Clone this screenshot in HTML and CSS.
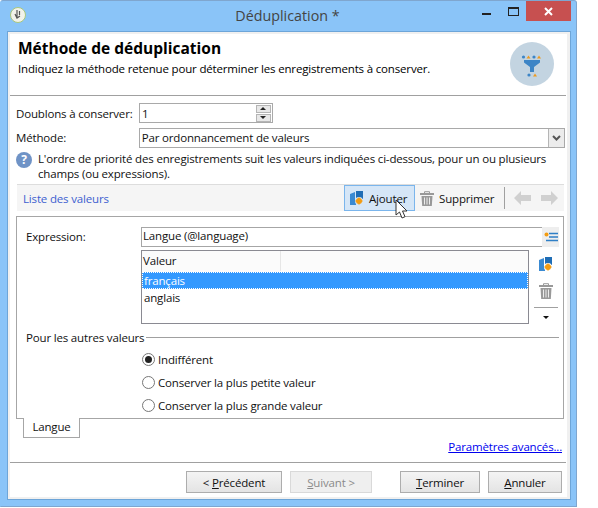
FILE: index.html
```html
<!DOCTYPE html>
<html lang="fr">
<head>
  <meta charset="UTF-8">
  <title>Déduplication *</title>
  <link rel="stylesheet" href="styles.css">
</head>
<body>

<div class="window">
  <div class="titlebar">
    <svg class="app-icon" width="16" height="16" viewBox="0 0 16 16">
      <circle cx="8" cy="8" r="7.5" fill="#f2f2ea" stroke="#a9c77c"/>
      <path d="M7 3v8M9.5 4v4M5 7l2 4 3-2" fill="none" stroke="#555" stroke-width="1.2"/>
    </svg>
    <span class="window-title">Déduplication *</span>
    <div class="controls">
      <span class="ctl-min"></span>
      <span class="ctl-max"></span>
      <span class="ctl-close">
        <svg width="9" height="9" viewBox="0 0 9 9"><path d="M1 1l7 7M8 1l-7 7" stroke="#fff" stroke-width="2"/></svg>
      </span>
    </div>
  </div>

  <div class="client">
    <div class="content">
      <div class="header">
        <div>
          <h1>Méthode de déduplication</h1>
          <p>Indiquez la méthode retenue pour déterminer les enregistrements à conserver.</p>
        </div>
        <svg class="header-icon" width="44" height="44" viewBox="0 0 44 44">
          <circle cx="22" cy="22" r="22" fill="#c3d4e1"/>
          <circle cx="13.500" cy="15" r="1.600" fill="#3d85c6"/>
          <path d="M16.500 16.500l2-3 2 3z" fill="#ee9b1f"/>
          <circle cx="24" cy="15" r="1.600" fill="#3d85c6"/>
          <path d="M27 16.500l2-3 2 3z" fill="#ee9b1f"/>
          <path d="M14 18h16v2.500l-6 4.500v5h-4v-5l-6-4.500z" fill="#3d85c6"/>
          <circle cx="19" cy="33" r="1.600" fill="#3d85c6"/>
          <path d="M23 34.500l2-3 2 3z" fill="#ee9b1f"/>
        </svg>
      </div>

      <div class="form">
        <div class="row row-first">
          <label>Doublons à conserver:</label>
          <div class="spin">
            <span class="spin-value">1</span>
            <span class="spin-btns">
              <i class="spin-up"></i>
              <i class="spin-down"></i>
            </span>
          </div>
        </div>

        <div class="row">
          <label class="label-up">Méthode:</label>
          <div class="select">
            <span class="select-value">Par ordonnancement de valeurs</span>
            <span class="select-btn">
              <svg width="9" height="6" viewBox="0 0 9 6"><path d="M1 1l3.500 3.500L8 1" fill="none" stroke="#555" stroke-width="2"/></svg>
            </span>
          </div>
        </div>

        <div class="info">
          <span class="info-icon">?</span>
          <p>L'ordre de priorité des enregistrements suit les valeurs indiquées ci-dessous, pour un ou plusieurs champs (ou expressions).</p>
        </div>

        <div class="toolbar">
          <span class="toolbar-title">Liste des valeurs</span>
          <span class="tool tool-active">
            <svg width="13" height="14" viewBox="0 0 13 14">
              <path d="M6 0h7v8H6z" fill="#1f6db5"/>
              <path d="M0 3l5-2v8h1v5H0z" fill="#3a8ad2"/>
              <circle cx="9" cy="10" r="4" fill="#d5e6f7"/>
              <circle cx="9" cy="10" r="3" fill="#f39c12"/>
              <path d="M9 6.300v7.400M5.300 10h7.400" stroke="#f39c12"/>
            </svg>
            Ajouter
          </span>
          <span class="tool tool-trash">
            <svg width="14" height="15" viewBox="0 0 14 15">
              <path d="M4.500 2V.7h5V2" fill="none" stroke="#999"/>
              <path d="M0 2h14v2H0z" fill="#999"/>
              <path d="M1.500 5h11l-.7 10H2.200z" fill="#999"/>
              <path d="M4.500 6.500v7M7 6.500v7M9.500 6.500v7" stroke="#ececec"/>
            </svg>
            Supprimer
          </span>
          <span class="tool-sep"></span>
          <svg class="arrow" width="17" height="14" viewBox="0 0 17 14"><path d="M0 7l7-7v4h10v6H7v4z" fill="#d0d0d0"/></svg>
          <svg class="arrow" width="17" height="14" viewBox="0 0 17 14"><path d="M17 7l-7-7v4H0v6h10v4z" fill="#d0d0d0"/></svg>
        </div>

        <div class="panel">
          <div class="expr-row">
            <label class="label-up">Expression:</label>
            <span class="expr-value">Langue (@language)</span>
            <span class="expr-btn">
              <svg width="14" height="11" viewBox="0 0 14 11">
                <circle cx="2.500" cy="2.500" r="2" fill="#f39c12"/>
                <path d="M5 1.500h9M5 5h9M2 8.500h12" stroke="#2f7fc6" stroke-width="1.500" fill="none"/>
              </svg>
            </span>
          </div>

          <div class="list-row">
            <div class="list">
              <div class="list-head"><span>Valeur</span></div>
              <div class="list-item list-item-sel">français</div>
              <div class="list-item">anglais</div>
            </div>
            <div class="list-side">
              <svg width="13" height="14" viewBox="0 0 13 14">
                <path d="M6 0h7v8H6z" fill="#1f6db5"/>
                <path d="M0 3l5-2v8h1v5H0z" fill="#3a8ad2"/>
                <circle cx="9" cy="10" r="4" fill="#fff"/>
                <circle cx="9" cy="10" r="3" fill="#f39c12"/>
                <path d="M9 6.300v7.400M5.300 10h7.400" stroke="#f39c12"/>
              </svg>
              <svg class="side-trash" width="14" height="16" viewBox="0 0 14 16">
                <path d="M4.500 2V.7h5V2" fill="none" stroke="#999"/>
                <path d="M0 2h14v2H0z" fill="#999"/>
                <path d="M1.500 5h11l-.7 11H2.200z" fill="#999"/>
                <path d="M4.500 6.500v8M7 6.500v8M9.500 6.500v8" stroke="#ececec"/>
              </svg>
              <span class="side-sep"></span>
              <span class="side-caret"></span>
            </div>
          </div>

          <div class="group-title"><span>Pour les autres valeurs</span></div>

          <div class="radios">
            <div class="radio radio-on"><i></i>Indifférent</div>
            <div class="radio"><i></i>Conserver la plus petite valeur</div>
            <div class="radio"><i></i>Conserver la plus grande valeur</div>
          </div>
        </div>

        <div class="tab">Langue</div>
        <div class="advanced"><a href="#">Paramètres avancés...</a></div>
      </div>

      <div class="footer">
        <button class="btn btn-prev">&lt; <u>P</u>récédent</button>
        <button class="btn btn-next" disabled><u>S</u>uivant &gt;</button>
        <button class="btn btn-end"><u>T</u>erminer</button>
        <button class="btn btn-cancel"><u>A</u>nnuler</button>
      </div>
    </div>
  </div>

  <svg class="cursor" width="13" height="20" viewBox="0 0 13 20">
    <path d="M1 1v15l3.500-3 2.500 6 3-1.300-2.500-5.700H12z" fill="#fff" stroke="#333"/>
  </svg>
</div>

</body>
</html>
```

FILE: styles.css
```css
* {
  box-sizing: border-box;
}
body {
  margin: 0;
  background: #fff;
  font-family: "Open Sans", "Noto Sans", sans-serif;
  font-size: 11.5px;
  letter-spacing: -0.17px;
  color: #111;
}
p, h1 {
  margin: 0;
}
label {
  display: block;
}
.label-up {
  margin-bottom: 2px;
}

.window {
  position: relative;
  width: 577px;
  height: 507px;
  background: #8ac4f8;
  border: 1px solid #7fa6cf;
  border-left-color: #8ac4f8;
  border-radius: 3px 3px 0 0;
  padding: 0 5px 0 6px;
}

.titlebar {
  position: relative;
  display: flex;
  justify-content: center;
  height: 30px;
}
.app-icon {
  position: absolute;
  left: 3px;
  top: 6px;
}
.window-title {
  margin: 4px 3px 0 0;
  font-size: 14.3px;
  letter-spacing: 0;
  line-height: 21px;
  color: #444;
}
.controls {
  position: absolute;
  right: 0;
  top: 0;
  display: flex;
  align-items: flex-start;
}
.ctl-min {
  width: 9px;
  height: 2px;
  margin-top: 12px;
  background: #222;
}
.ctl-max {
  width: 11px;
  height: 9px;
  margin: 6px 7px 0 17px;
  border: 1px solid #222;
  border-top-width: 2px;
}
.ctl-close {
  display: flex;
  align-items: center;
  justify-content: center;
  width: 45px;
  height: 20px;
  background: #c75050;
}

.client {
  height: 469px;
  border: 1px solid #6da5d8;
}
.content {
  height: 467px;
  background: #fff;
  border: solid #f0f0f0;
  border-width: 2px 3px 2px 2px;
}

.header {
  display: flex;
  justify-content: space-between;
  height: 62px;
  margin-right: 1px;
  padding: 4px 12px 0 8px;
  border-bottom: 1px solid #a0a0a0;
}
.header h1 {
  font-size: 15.5px;
  line-height: 20px;
  letter-spacing: 0;
  font-weight: 700;
  color: #000;
}
.header p {
  margin-top: 3px;
  line-height: 16px;
  color: #000;
}
.header-icon {
  margin-top: 4px;
}

.form {
  padding: 0 2px 0 6px;
}
.row {
  display: flex;
  align-items: center;
  height: 20px;
  margin-top: 5px;
}
.row-first {
  margin-top: 7px;
}
.row label {
  width: 123px;
}
.spin {
  display: flex;
  align-items: center;
  justify-content: space-between;
  width: 134px;
  height: 20px;
  padding: 0 1px 0 2px;
  border: 1px solid #a9a9a9;
}
.spin-btns {
  display: flex;
  flex-direction: column;
  gap: 1px;
}
.spin-btns i {
  position: relative;
  display: block;
  width: 15px;
  height: 8px;
  background: #e8e8e8;
  border: 1px solid #b5b5b5;
}
.spin-btns i::after {
  content: "";
  position: absolute;
  left: 3px;
  border-left: 3.5px solid transparent;
  border-right: 3.5px solid transparent;
}
.spin-up::after {
  top: 1px;
  border-bottom: 3.5px solid #222;
}
.spin-down::after {
  top: 1px;
  border-top: 3.5px solid #222;
}
.select {
  display: flex;
  align-items: center;
  justify-content: space-between;
  width: 427px;
  height: 20px;
  padding-left: 2px;
  border: 1px solid #a9a9a9;
}
.select-value {
  padding-bottom: 2px;
}
.select-btn {
  display: flex;
  align-items: center;
  justify-content: center;
  width: 16px;
  height: 18px;
  background: #ececec;
  border-left: 1px solid #b5b5b5;
}

.info {
  display: flex;
  gap: 6px;
  margin-top: 4px;
}
.info p {
  flex: 1;
  margin-top: -1px;
  line-height: 15px;
}
.info-icon {
  width: 16px;
  height: 16px;
  border-radius: 50%;
  background: #6f93c6;
  color: #fff;
  font-size: 12px;
  font-weight: 700;
  line-height: 16px;
  text-align: center;
}

.toolbar {
  display: flex;
  align-items: center;
  width: 547px;
  height: 27px;
  margin: 3px 0 0 1px;
  background: #f5f5f5;
  border-top: 1px solid #ddd;
}
.toolbar-title {
  width: 327px;
  padding-left: 6px;
  color: #3d5fd0;
  flex-shrink: 0;
}
.tool {
  display: flex;
  flex-shrink: 0;
  align-items: center;
  gap: 5px;
  height: 26px;
  padding: 0 6px 0 5px;
  color: #111;
}
.tool-active {
  width: 71px;
  gap: 6px;
  background: #d5e6f7;
  border: 1px solid #7ab5ec;
}
.tool-trash {
  gap: 5px;
}
.tool-sep {
  flex-shrink: 0;
  width: 1px;
  height: 22px;
  margin: 0 9px 0 4px;
  background: #a0a0a0;
}
.arrow {
  flex-shrink: 0;
  margin-right: 10px;
}

.panel {
  height: 203px;
  margin-top: 5px;
  width: 548px;
  padding: 10px 4px 0 9px;
  border: 1px solid #a6a6a6;
}
.expr-row {
  display: flex;
  align-items: center;
  height: 20px;
}
.expr-row label {
  width: 115px;
}
.expr-value {
  flex: 1;
  height: 20px;
  padding-left: 1px;
  line-height: 16px;
  border: solid #a6a6a6;
  border-width: 1px 0 1px 1px;
}
.expr-btn {
  display: flex;
  align-items: center;
  justify-content: center;
  width: 17px;
  height: 20px;
  background: #eee;
}
.list-row {
  display: flex;
  margin: 3px 0 0 115px;
}
.list {
  width: 390px;
  height: 74px;
  border: 1px solid #8a8a92;
}
.list-head {
  height: 21px;
  background: #fbfbfb;
  line-height: 20px;
  padding-left: 1px;
}
.list-head span {
  display: block;
  width: 138px;
  border-right: 1px solid #e6e6e6;
}
.list-item {
  height: 17px;
  padding-left: 2px;
  line-height: 18px;
}
.list-item-sel {
  background: #3399ff;
  color: #fff;
  border: 1px dotted #fff;
  padding-left: 1px;
  line-height: 15px;
}
.list-side {
  display: flex;
  flex-direction: column;
  align-items: center;
  width: 27px;
  margin-left: 3px;
  padding-top: 7px;
}
.side-trash {
  margin-top: 12px;
}
.side-sep {
  width: 24px;
  height: 1px;
  margin-top: 8px;
  background: #a0a0a0;
}
.side-caret {
  margin-top: 8px;
  border-left: 3.5px solid transparent;
  border-right: 3.5px solid transparent;
  border-top: 3.5px solid #111;
}

.group-title {
  display: flex;
  align-items: center;
  gap: 2px;
  height: 16px;
  margin-top: 5px;
}
.group-title::after {
  content: "";
  flex: 1;
  height: 1px;
  background: #a0a0a0;
}

.radios {
  margin: 3px 0 0 116px;
}
.radio {
  display: flex;
  align-items: center;
  gap: 3px;
  height: 23px;
}
.radio i {
  position: relative;
  width: 13px;
  height: 13px;
  background: #fff;
  border: 1px solid #777;
  border-radius: 50%;
}
.radio-on i::after {
  content: "";
  position: absolute;
  left: 2px;
  top: 2px;
  width: 7px;
  height: 7px;
  background: #222;
  border-radius: 50%;
}

.tab {
  position: relative;
  width: 57px;
  height: 20px;
  margin: -1px 0 0 7px;
  background: #fff;
  border: 1px solid #a6a6a6;
  border-top: 0;
  line-height: 18px;
  text-align: center;
}
.advanced {
  padding: 1px 3px 0 0;
  text-align: right;
  line-height: 16px;
}
.advanced a {
  color: #0000ee;
}

.footer {
  display: flex;
  height: 35px;
  margin: 7px 1px 0 0;
  padding: 8px 0 0 176px;
  border-top: 1px solid #a0a0a0;
}
.btn {
  height: 22px;
  padding: 0;
  font: inherit;
  letter-spacing: inherit;
  color: #111;
  background: linear-gradient(#f4f4f4, #e4e4e4);
  border: 1px solid #adadad;
}
.btn-prev {
  width: 96px;
}
.btn-next {
  width: 82px;
  margin-left: 8px;
  color: #8a8a8a;
  background: #efefef;
  border-color: #d9d9d9;
}
.btn-end {
  width: 80px;
  margin-left: 28px;
}
.btn-cancel {
  width: 74px;
  margin-left: 8px;
}

.cursor {
  position: absolute;
  left: 394px;
  top: 198px;
}
```
